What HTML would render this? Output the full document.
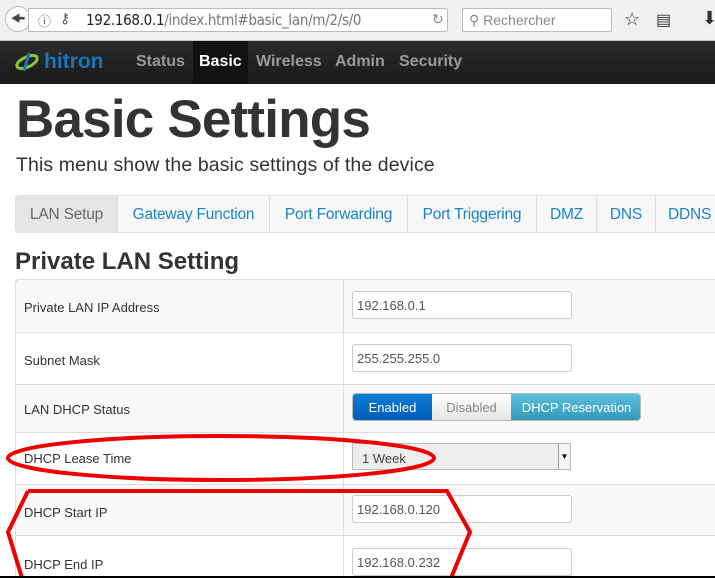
<!DOCTYPE html>
<html><head><style>
*{margin:0;padding:0;box-sizing:border-box}
body{width:715px;height:578px;overflow:hidden;background:#fff;font-family:"Liberation Sans",sans-serif;position:relative}
.abs{position:absolute}
.bar{left:0;top:0;width:715px;height:41px;background:#f2f1f0;border-bottom:1px solid #c9c9c9}
.nav{left:0;top:41px;width:715px;height:43px;background:linear-gradient(#2b2b2b,#1a1a1a)}
.nav span{position:absolute;top:12px;font-size:16px;font-weight:bold;color:#999}
.tabs{left:15px;top:195px;width:700px;height:38px;border:1px solid #ddd;border-right:none;border-radius:4px 0 0 4px;background:#f7f7f7}
.tab{position:absolute;top:0;height:37px;line-height:37px;font-size:15.5px;color:#1a85c6;border-right:1px solid #ddd;text-align:center;letter-spacing:-0.2px}
.row{position:absolute;left:15px;width:700px;border-top:1px solid #ddd;border-left:1px solid #ddd}
.row .l{position:absolute;left:8px;font-size:13px;color:#333}
.row .d{position:absolute;left:327px;top:0;bottom:0;border-left:1px solid #ddd}
.inp{position:absolute;left:352px;width:220px;height:28px;border:1px solid #ccc;border-radius:3px;background:#fff;font-size:13px;color:#555;padding:6px 0 0 4px}
</style></head><body>
<div class="abs bar">
 <div class="abs" style="left:5px;top:6px;width:26px;height:26px;border-radius:13px;border:1px solid #bbb;background:#fafafa;font-size:17px;text-align:center;line-height:24px;color:#444">&#129052;</div>
 <div class="abs" style="left:28px;top:8px;width:420px;height:24px;border:1px solid #bbb;background:#fff;border-radius:0 3px 3px 0"></div>
 <div class="abs" style="left:38px;top:11px;font-size:13px;color:#666">ⓘ</div>
 <div class="abs" style="left:60px;top:10px;font-size:14px;color:#555">⚷</div>
 <div class="abs" style="left:86px;top:11px;font-size:15px;color:#222;font-family:'DejaVu Sans Condensed','DejaVu Sans',sans-serif;letter-spacing:-0.3px">192.168.0.1<span style="color:#777">/index.html#basic_lan/m/2/s/0</span></div>
 <div class="abs" style="left:432px;top:11px;font-size:14px;color:#888">↻</div>
 <div class="abs" style="left:462px;top:8px;width:150px;height:24px;border:1px solid #bbb;background:#fff;border-radius:2px;font-size:14px;color:#888;padding:3px 0 0 6px">⚲ Rechercher</div>
 <div class="abs" style="left:624px;top:9px;font-size:18px;color:#333">☆</div>
 <div class="abs" style="left:656px;top:10px;font-size:16px;color:#333">▤</div>
 <div class="abs" style="left:702px;top:8px;font-size:18px;color:#333">⬇</div>
</div>
<div class="abs nav">
 <div class="abs" style="left:193px;top:0;width:55px;height:43px;background:#111"></div>
 <svg class="abs" style="left:14px;top:10px" width="26" height="22"><ellipse cx="13" cy="11" rx="11" ry="5" fill="none" stroke="#8dc63f" stroke-width="3" transform="rotate(-25 13 11)"/><path d="M15 2 L10 20" stroke="#1b75bb" stroke-width="3"/></svg>
 <div class="abs" style="left:44px;top:9px;font-size:21px;font-weight:bold;color:#1b75bb">hitron</div>
 <span style="left:136px">Status</span>
 <span style="left:199px;color:#fff">Basic</span>
 <span style="left:256px">Wireless</span>
 <span style="left:335px">Admin</span>
 <span style="left:399px">Security</span>
</div>
<div class="abs" style="left:16px;top:89px;font-size:53px;font-weight:bold;color:#333;letter-spacing:-0.8px">Basic Settings</div>
<div class="abs" style="left:16px;top:154px;font-size:19.5px;color:#333;letter-spacing:0.1px">This menu show the basic settings of the device</div>
<div class="abs tabs">
 <div class="tab" style="left:0;width:102px;background:#e6e6e6;color:#666">LAN Setup</div>
 <div class="tab" style="left:102px;width:152px">Gateway Function</div>
 <div class="tab" style="left:254px;width:138px">Port Forwarding</div>
 <div class="tab" style="left:392px;width:129px">Port Triggering</div>
 <div class="tab" style="left:521px;width:60px">DMZ</div>
 <div class="tab" style="left:581px;width:59px">DNS</div>
 <div class="tab" style="left:640px;width:60px;text-align:left;padding-left:12px;border:none">DDNS</div>
</div>
<div class="abs" style="left:15px;top:248px;font-size:24px;font-weight:bold;color:#333">Private LAN Setting</div>
<div class="row" style="top:279px;height:53px;background:#f9f9f9;border-radius:4px 0 0 0"><div class="l" style="top:20px">Private LAN IP Address</div><div class="d"></div></div>
<div class="row" style="top:332px;height:52px"><div class="l" style="top:20px">Subnet Mask</div><div class="d"></div></div>
<div class="row" style="top:384px;height:48px;background:#f9f9f9"><div class="l" style="top:17px">LAN DHCP Status</div><div class="d"></div></div>
<div class="row" style="top:432px;height:52px"><div class="l" style="top:18px">DHCP Lease Time</div><div class="d"></div></div>
<div class="row" style="top:484px;height:51px;background:#f9f9f9"><div class="l" style="top:20px">DHCP Start IP</div><div class="d"></div></div>
<div class="row" style="top:535px;height:43px"><div class="l" style="top:21px">DHCP End IP</div><div class="d"></div></div>
<div class="inp" style="top:291px">192.168.0.1</div>
<div class="inp" style="top:344px">255.255.255.0</div>
<div class="abs" style="left:352px;top:393px;width:289px;height:28px;border-radius:4px;overflow:hidden;font-size:13px;border:1px solid #bbb">
 <div class="abs" style="left:0;top:0;width:79px;height:28px;background:linear-gradient(#0a7fd6,#0058b8);color:#fff;text-align:center;line-height:28px">Enabled</div>
 <div class="abs" style="left:79px;top:0;width:79px;height:28px;background:linear-gradient(#fff,#e3e3e3);color:#888;text-align:center;line-height:28px">Disabled</div>
 <div class="abs" style="left:158px;top:0;width:131px;height:28px;background:linear-gradient(#5bc0de,#2f96b4);color:#fff;text-align:center;line-height:28px">DHCP Reservation</div>
</div>
<div class="abs" style="left:352px;top:443px;width:219px;height:27px;border:1px solid #bbb;background:#eeeeec;font-size:13px;color:#444;padding:7px 0 0 9px">1 Week<div class="abs" style="right:0;top:0;width:12px;height:25px;background:#f5f5f5;border-left:1px solid #999;font-size:8px;text-align:center;line-height:25px;color:#000">▼</div></div>
<div class="inp" style="top:495px">192.168.0.120</div>
<div class="inp" style="top:548px">192.168.0.232</div>
<svg class="abs" style="left:0;top:0" width="715" height="578">
 <ellipse cx="221" cy="458" rx="213" ry="22" fill="none" stroke="#e00" stroke-width="4"/>
 <polyline points="28,491 447,491 470,532 451,578" fill="none" stroke="#e00" stroke-width="4"/>
 <polyline points="28,491 8,532 22,578" fill="none" stroke="#e00" stroke-width="4"/>
 <line x1="0" y1="577" x2="715" y2="577" stroke="#000" stroke-width="2"/>
</svg>
</body></html>
